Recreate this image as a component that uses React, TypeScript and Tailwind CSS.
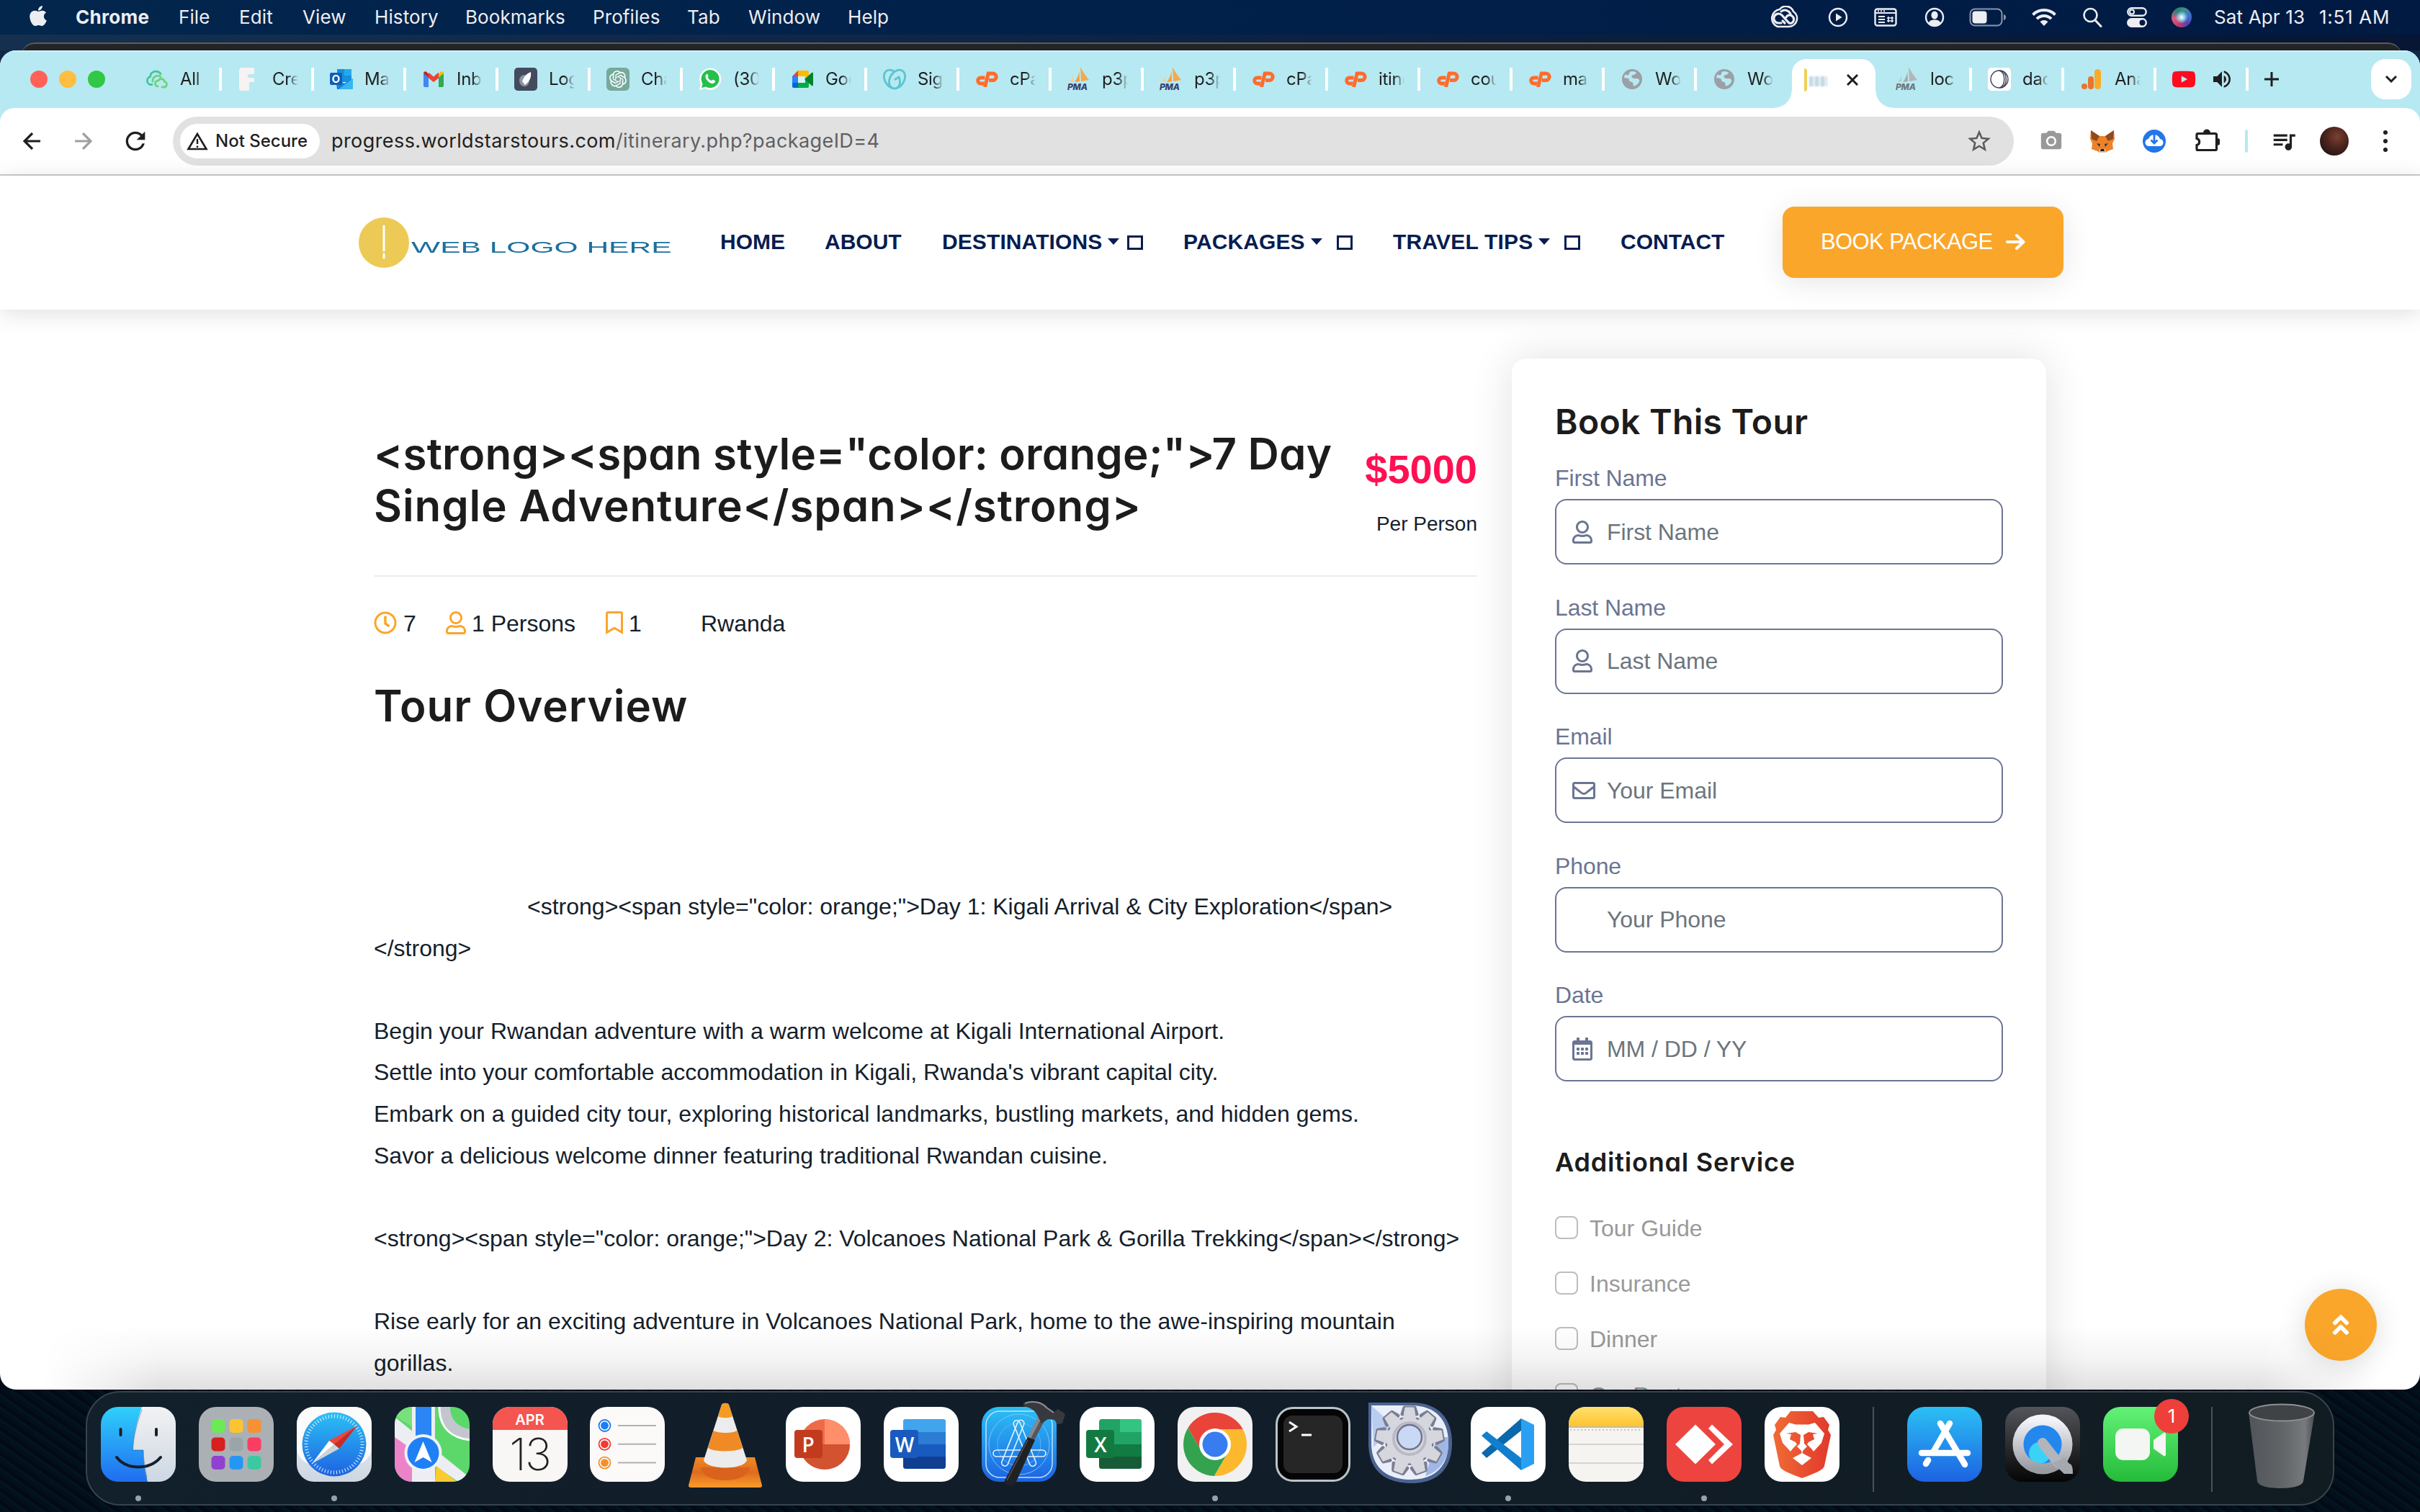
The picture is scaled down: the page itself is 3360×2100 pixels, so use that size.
import React from "react";
import {
  FaApple,
  FaYoutube,
  FaRegUser,
  FaRegClock,
  FaRegBookmark,
  FaRegEnvelope,
  FaRegCalendarAlt,
  FaAngleDoubleUp,
} from "react-icons/fa";
import { SiGodaddy, SiOpenai } from "react-icons/si";
import { MdQueueMusic, MdStarBorder, MdCameraAlt, MdVolumeUp, MdRefresh } from "react-icons/md";

type Kids = { children?: React.ReactNode };

/* ---------- macOS menu bar ---------- */

const menus: [string, string][] = [
  ["File", "w-[84px]"],
  ["Edit", "w-[88px]"],
  ["View", "w-[100px]"],
  ["History", "w-[126px]"],
  ["Bookmarks", "w-[177px]"],
  ["Profiles", "w-[131px]"],
  ["Tab", "w-[85px]"],
  ["Window", "w-[138px]"],
  ["Help", "w-[80px]"],
];

function MenuBar() {
  return (
    <div className="flex h-12 items-center bg-linear-to-r from-[#03264d] via-[#01204a] to-[#001a42] text-[26px] text-[#eceef2]">
      <FaApple className="ml-[37px] size-8 -translate-y-[2px]" />
      <span className="ml-[36px] w-[143px] -translate-y-[1px] font-bold tracking-[0.300px]">Chrome</span>
      {menus.map(([label, w]) => (
        <span key={label} className={`${w} -translate-y-[1px] whitespace-nowrap tracking-[0.100px]`}>
          {label}
        </span>
      ))}
      <div className="ml-auto flex items-center">
        <svg className="h-8 w-[42px]" viewBox="0 0 42 32" fill="none" stroke="currentColor" strokeLinecap="round">
          <path d="M12 29h16a11.500 11.500 0 0 0 6-21A11 11 0 0 0 15 5 12.500 12.500 0 0 0 12 29Z" strokeWidth="2.600" />
          <path d="M17 24h-4a6.500 6.500 0 1 1 5-11l10 11c6 2 9-6 4-10-3-2-7-1-8 2M22 24l-3-3" strokeWidth="3.200" />
          <path d="M17 8c5-4 11-1 13 3" strokeWidth="3" />
        </svg>
        <svg className="ml-[40px] size-7" viewBox="0 0 28 28" fill="none">
          <circle cx="14" cy="14" r="12" stroke="currentColor" strokeWidth="2.400" />
          <path d="M11 8.500v11l8.500-5.500z" fill="currentColor" />
        </svg>
        <svg className="ml-[36px] h-[26px] w-8" viewBox="0 0 32 26" fill="none" stroke="currentColor" strokeWidth="2.400">
          <rect x="1.500" y="1.500" width="29" height="23" rx="3" />
          <path d="M2 7h28" strokeWidth="2" />
          <path d="M5 4.300h2M9 4.300h2M13 4.300h2" strokeWidth="2" />
          <path d="M6 12h9M6 16h9M6 20h9" strokeWidth="2" />
          <path d="M20 12v8M25 12v8M18 14h9M18 18h9" strokeWidth="1.600" />
        </svg>
        <svg className="ml-[38px] size-7" viewBox="0 0 28 28">
          <circle cx="14" cy="14" r="12" stroke="currentColor" strokeWidth="2.400" fill="none" />
          <ellipse cx="14" cy="11" rx="4.600" ry="5.600" fill="currentColor" />
          <path d="M5.500 22c2-4 5-4.500 8.500-4.500s6.500.5 8.500 4.500a12 12 0 0 1-17 0z" fill="currentColor" />
        </svg>
        <svg className="ml-[34px] h-[26px] w-[52px]" viewBox="0 0 52 26" fill="none">
          <rect x="1.500" y="1.500" width="44" height="23" rx="6.500" stroke="#8b96a9" strokeWidth="2" />
          <path d="M48 9v8c2-.6 3-2 3-4s-1-3.400-3-4z" fill="#8b96a9" />
          <rect x="4.500" y="4.500" width="20" height="17" rx="4" fill="currentColor" />
        </svg>
        <svg className="ml-[34px] h-[26px] w-9" viewBox="0 0 36 26" fill="none" stroke="currentColor" strokeWidth="4">
          <path d="M2.500 9.500a22 22 0 0 1 31 0M8 15.200a14 14 0 0 1 20 0" />
          <path d="M18 25l-5.500-5.700a8 8 0 0 1 11 0z" fill="currentColor" stroke="none" />
        </svg>
        <svg className="ml-[35px] size-7" viewBox="0 0 28 28" fill="none" stroke="currentColor" strokeWidth="2.600">
          <circle cx="11.500" cy="11" r="9" />
          <path d="M18 18l8 8.500" strokeWidth="3" strokeLinecap="round" />
        </svg>
        <svg className="ml-[34px] size-7" viewBox="0 0 28 28" fill="none">
          <rect x="1.300" y="1.300" width="25.400" height="10.400" rx="5.200" stroke="currentColor" strokeWidth="2.400" />
          <circle cx="7" cy="6.500" r="3" stroke="currentColor" strokeWidth="2" />
          <rect y="15" width="28" height="13" rx="6.500" fill="currentColor" />
          <circle cx="21.500" cy="21.500" r="4" fill="#001a42" />
        </svg>
        <span className="ml-[34px] size-7 rounded-full bg-[radial-gradient(circle_at_50%_50%,#ffffff_0%,#9ad7e8_18%,transparent_45%),conic-gradient(from_20deg,#3f8f8a,#3a6fd0,#5a3fb0,#c23a6a,#e05a7a,#2f7f77,#3f8f8a)]" />
        <span className="ml-[31px] w-[146px] -translate-y-[1px] whitespace-nowrap tracking-[0.150px]">Sat Apr 13</span>
        <span className="w-[140px] -translate-y-[1px] whitespace-nowrap tracking-[0.700px]">1:51 AM</span>
      </div>
    </div>
  );
}

/* ---------- favicons ---------- */

const CloudIcon = () => (
  <svg viewBox="0 0 32 32" className="size-8" fill="none" strokeWidth="2.800" strokeLinecap="round">
    <path d="M9 23.500H7.500a5.500 5.500 0 0 1-1-10.800A8 8 0 0 1 21 8.500" stroke="#3fc79a" />
    <path d="M10 19a7 7 0 0 1 11-6.500M17 26a4 4 0 0 1 1-8 4.500 4.500 0 0 1 8.500 1.500A3.800 3.800 0 0 1 26 27h-3" stroke="#6fd37c" />
  </svg>
);
const FIcon = () => (
  <svg viewBox="0 0 32 32" className="size-8">
    <path d="M5 0h18v9h-6a3 3 0 0 0-3 3v2h9v6h-7v12H5a4 4 0 0 1-3-4V4a4 4 0 0 1 3-4z" fill="#f6f3f2" />
  </svg>
);
const Outlook = () => (
  <svg viewBox="0 0 32 32" className="size-8">
    <rect x="10" y="2" width="20" height="18" fill="#1490df" />
    <rect x="20" y="2" width="10" height="9" fill="#28a8ea" />
    <path d="M8 15l12 7 12-7v13a2 2 0 0 1-2 2H10z" fill="#1d7fd6" />
    <path d="M32 15L12 30h18a2 2 0 0 0 2-2z" fill="#35b8f1" />
    <rect x="0" y="7" width="17" height="17" rx="2" fill="#0f5fb5" />
    <ellipse cx="8.500" cy="15.500" rx="4" ry="4.600" fill="none" stroke="#fff" strokeWidth="2.400" />
  </svg>
);
const Gmail = () => (
  <svg viewBox="0 0 32 32" className="size-8">
    <path d="M2 7v18a2 2 0 0 0 2 2h5V13z" fill="#4285f4" />
    <path d="M30 7v18a2 2 0 0 1-2 2h-5V13z" fill="#34a853" />
    <path d="M2 8l7 5.500V9L6 5.500C4 4.500 2 6 2 8z" fill="#c5221f" />
    <path d="M30 8l-7 5.500V9l3-3.500c2-1 4 .5 4 2.500z" fill="#fbbc04" />
    <path d="M9 6.500l7 6 7-6v8L16 20l-7-5.500z" fill="#ea4335" />
  </svg>
);
const Rocket = () => (
  <span className="flex size-8 items-center justify-center rounded-[5px] bg-[#434b5e]">
    <svg viewBox="0 0 24 24" className="size-6">
      <ellipse cx="10" cy="14" rx="7" ry="8" fill="#8c93a1" />
      <path d="M19 2c1 8-2 13-8 18l-4-5C9 9 13 4 19 2z" fill="#fff" />
    </svg>
  </span>
);
const ChatGpt = () => (
  <span className="flex size-8 items-center justify-center rounded-[6px] bg-[#75a99b]">
    <SiOpenai className="size-6 text-white" />
  </span>
);
const WhatsApp = () => (
  <svg viewBox="0 0 32 32" className="size-8">
    <path d="M1 31l2-8A15 15 0 1 1 9 29z" fill="#fff" />
    <path d="M4 28l1.600-5.600A12.500 12.500 0 1 1 10 26.500z" fill="#25c04a" />
    <path d="M11 9c2-1 3 3 2 4s3 5 5 5c1 0 1-2 3-1s3 2 1 4-6 1-9-2-5-8-2-10z" fill="#fff" />
  </svg>
);
const Meet = () => (
  <svg viewBox="0 0 32 32" className="size-8">
    <path d="M2 12l8-8v8z" fill="#ea4335" />
    <path d="M2 12h8v9H2z" fill="#2684fc" />
    <path d="M2 21h8v7H4a2 2 0 0 1-2-2z" fill="#0066da" />
    <path d="M10 4h13a2 2 0 0 1 2 2v10l-5 0v-4H10z" fill="#ffba00" />
    <path d="M10 21h10v-5h5v10a2 2 0 0 1-2 2H10z" fill="#00ac47" />
    <path d="M19 16l10-9c1-.6 2 0 2 1v16c0 1-1 1.600-2 1z" fill="#00832d" />
    <rect x="10" y="12" width="9" height="9" fill="#d7f2f6" />
  </svg>
);
const GoDaddy = () => <SiGodaddy className="size-8 text-[#5bc6cf]" />;
const CPanel = () => (
  <svg viewBox="0 0 32 22" className="h-[22px] w-8" fill="none" stroke="#ff6c2c" strokeWidth="5">
    <path d="M13.500 9h-5a4 4 0 0 0-1.500 8h2.500l-.8 2.500" />
    <path d="M13.500 22l4.700-19h6a4.800 4.800 0 0 1 .3 9.600H19" />
  </svg>
);
function Sail({ gray }: { gray?: boolean }) {
  const c = gray ? ["#c2c2c2", "#a8a8a8", "#b5b5b5"] : ["#f9c98b", "#fb9d2f", "#f7a94a"];
  return (
    <span className="relative block h-[34px] w-8">
      <svg viewBox="0 0 32 34" className="h-[34px] w-8">
        <path d="M8 5c1 7-1 13-6 16l6-1z" fill={c[0]} />
        <path d="M16 1c1 8-2 15-6 20l7-1z" fill={c[1]} />
        <path d="M18 0c3 6 8 13 12 18l-11 2z" fill={c[2]} />
      </svg>
      <span
        className={`absolute bottom-[-1px] left-0 text-[12px] leading-[14px] font-extrabold tracking-[-0.200px] italic ${gray ? "text-[#6f777c]" : "text-[#3b3f6b]"}`}
      >
        PMA
      </span>
    </span>
  );
}
const Pma = () => <Sail />;
const Globe = () => (
  <svg viewBox="0 0 32 32" className="size-8">
    <circle cx="16" cy="16" r="14" fill="#9aa0a6" />
    <path d="M16 5c3 0 5 1 6 2-1 3-4 2-6 4s1 4 4 4 5 0 6 2-2 7-7 8.500c-2 .5-1-3-2-4.500s-5-1-5-4-4-2-7-3c0-2 1-4 2-5 3 3 5 1 5-1s2-3 4-3z" fill="#b7e9f2" />
  </svg>
);
const Dac = () => (
  <span className="flex size-8 items-center justify-center rounded-[5px] bg-white">
    <svg viewBox="0 0 28 28" className="size-7" fill="none" stroke="#3c4257" strokeWidth="1.400">
      <circle cx="14" cy="14" r="12" />
      <path d="M14 2c9 3 9 21 0 24M17 2c9 5 8 20 0 24" />
    </svg>
  </span>
);
const Analytics = () => (
  <svg viewBox="0 0 32 32" className="size-8">
    <rect x="20" y="2" width="9" height="28" rx="4.500" fill="#f9ab2b" />
    <rect x="11" y="12" width="8" height="18" rx="4" fill="#e8762c" />
    <circle cx="6" cy="26" r="4" fill="#e8762c" />
  </svg>
);

const tabs: [string, () => React.ReactElement][] = [
  ["All", CloudIcon],
  ["Crea", FIcon],
  ["Mail", Outlook],
  ["Inbo", Gmail],
  ["Logi", Rocket],
  ["Chat", ChatGpt],
  ["(30)", WhatsApp],
  ["Goo", Meet],
  ["Sign", GoDaddy],
  ["cPa", CPanel],
  ["p3p", Pma],
  ["p3p", Pma],
  ["cPa", CPanel],
  ["itine", CPanel],
  ["cou", CPanel],
  ["mai", CPanel],
  ["Wo", Globe],
  ["Wo", Globe],
];

function TabLabel({ children }: Kids) {
  return (
    <span className="ml-4 w-[36px] overflow-hidden mask-r-from-60% mask-r-to-100% whitespace-nowrap text-[24px] leading-8 tracking-[-0.300px] text-[#1f1f1f]">
      {children}
    </span>
  );
}

function Tab({ label, icon: Icon, last }: { label: string; icon: () => React.ReactElement; last?: boolean }) {
  return (
    <div className="flex h-8 w-32 shrink-0 items-center">
      <span className="ml-[22px] flex w-8 justify-center">
        <Icon />
      </span>
      <TabLabel>{label}</TabLabel>
      {!last && <span className="ml-auto h-8 w-1 shrink-0 rounded-[1px] bg-white" />}
    </div>
  );
}

function TabStrip() {
  return (
    <div className="flex h-20 items-center bg-[#b7e9f2] shadow-[inset_0_2px_0_#cdf1f7]">
      <div className="ml-[42px] flex w-[138px] gap-4">
        <span className="size-6 rounded-full bg-[#ff6159]" />
        <span className="size-6 rounded-full bg-[#ffbd41]" />
        <span className="size-6 rounded-full bg-[#30c845]" />
      </div>
      {tabs.map(([label, icon], i) => (
        <Tab key={i} label={label} icon={icon} last={i === 17} />
      ))}
      <div className="relative mr-[6px] ml-[4px] flex h-[68px] w-[116px] items-center self-end rounded-t-[20px] bg-white">
        <span className="absolute bottom-0 -left-6 size-6 bg-[radial-gradient(circle_at_0_0,transparent_23px,white_24px)]" />
        <span className="absolute -right-6 bottom-0 size-6 bg-[radial-gradient(circle_at_100%_0,transparent_23px,white_24px)]" />
        <span className="mb-[10px] ml-[17px] flex h-8 w-8 items-center gap-[3px]">
          <span className="h-8 w-1 rounded-r-full bg-[#f0cf58]" />
          <span className="mt-1 h-[14px] w-[25px] bg-[repeating-linear-gradient(90deg,#c3d8e6_0_5px,#e8f0f5_5px_8px)] blur-[1px]" />
        </span>
        <svg className="mb-[10px] ml-[27px] size-4" viewBox="0 0 16 16" stroke="#1f1f1f" strokeWidth="3">
          <path d="M1 1l14 14M15 1L1 15" />
        </svg>
      </div>
      <div className="flex">
        <Tab label="loc" icon={() => <Sail gray />} />
        <Tab label="dac" icon={Dac} />
        <Tab label="Ana" icon={Analytics} />
        <div className="flex h-8 w-32 items-center">
          <FaYoutube className="ml-[21px] size-[34px] text-[#ff0a1f]" />
          <MdVolumeUp className="ml-[20px] size-8 text-[#1f1f1f]" />
          <span className="ml-auto h-8 w-1 rounded-[1px] bg-white" />
        </div>
      </div>
      <svg className="ml-[22px] size-5" viewBox="0 0 20 20" stroke="#1f1f1f" strokeWidth="3">
        <path d="M10 0v20M0 10h20" />
      </svg>
      <span className="mr-3 ml-auto flex size-14 items-center justify-center rounded-[20px] bg-white">
        <svg className="h-[10px] w-4" viewBox="0 0 16 10" fill="none" stroke="#1f1f1f" strokeWidth="3">
          <path d="M1 1l7 7 7-7" />
        </svg>
      </span>
    </div>
  );
}

/* ---------- browser toolbar ---------- */

function Toolbar() {
  return (
    <div className="bg-[#b7e9f2]">
      <div className="flex h-[94px] items-center rounded-t-[20px] border-b-2 border-[#cbcbcb] bg-white">
        <svg className="ml-8 size-6" viewBox="0 0 24 24" fill="none" stroke="#1f1f1f" strokeWidth="3.200">
          <path d="M24 12H2M13 1L2 12l11 11" />
        </svg>
        <svg className="ml-[48px] size-6" viewBox="0 0 24 24" fill="none" stroke="#a0a0a0" strokeWidth="3.200">
          <path d="M0 12h22M11 1l11 11-11 11" />
        </svg>
        <MdRefresh className="ml-[40px] size-10 text-[#1f1f1f]" />
        <div className="ml-[32px] flex h-[68px] w-[2556px] items-center rounded-full bg-[#e1e1e1]">
          <div className="ml-[10px] flex h-12 w-[194px] items-center rounded-full bg-white">
            <svg className="ml-[9px] h-[26px] w-[30px]" viewBox="0 0 30 26" fill="none" stroke="#1f1f1f" strokeWidth="2.600">
              <path d="M15 3L2.500 24h25z" />
              <path d="M15 10v7M15 19.500v2.500" strokeWidth="2.400" />
            </svg>
            <span className="ml-[10px] whitespace-nowrap text-[24px] font-medium text-[#1f1f1f]">Not Secure</span>
          </div>
          <span className="ml-[16px] whitespace-nowrap text-[27px] tracking-[0.420px] text-[#1f1f1f]">
            progress.worldstarstours.com<span className="text-[#5f6063]">/itinerary.php?packageID=4</span>
          </span>
          <MdStarBorder className="mr-[29px] ml-auto size-[38px] text-[#5a5a5a]" />
        </div>
        <MdCameraAlt className="ml-[35px] size-[34px] text-[#999999]" />
        <svg className="ml-[37px] h-[31px] w-[34px]" viewBox="0 0 34 31">
          <path d="M1 0l12 8h8L33 0l1 12-3 6 1 8-8 3-3 2h-8l-3-2-8-3 1-8-3-6z" fill="#ee8228" />
          <path d="M1 0l12 8-4 7-7-3zM33 0L21 8l4 7 7-3z" fill="#8f4a1f" />
          <path d="M9 18l5 1-1 4zM25 18l-5 1 1 4z" fill="#2c3440" />
          <path d="M13 26h8l1 5h-10z" fill="#d8c6b8" />
          <path d="M15 26h4l1 3h-6z" fill="#1d1d1d" />
        </svg>
        <svg className="ml-[39px] size-8" viewBox="0 0 32 32">
          <circle cx="16" cy="16" r="16" fill="#2276e8" />
          <path d="M9 23a5 5 0 0 1-1-10 8.500 8.500 0 0 1 16 0 5 5 0 0 1-1 10z" fill="#fff" />
          <path d="M16 6v11M11.500 14.500L16 19l4.500-4.500" stroke="#2276e8" strokeWidth="2.800" fill="none" />
        </svg>
        <svg className="ml-[41px] size-[34px] -translate-y-[2px]" viewBox="0 0 34 34">
          <path
            d="M3 8.500h25a1.500 1.500 0 0 1 1.500 1.500v20a1.500 1.500 0 0 1-1.500 1.500H3.500A1.500 1.500 0 0 1 2 30v-5.500a4.600 4.600 0 0 0 0-9V10a1.500 1.500 0 0 1 1.500-1.500z"
            fill="none"
            stroke="#1f1f1f"
            strokeWidth="3.200"
          />
          <path d="M11 7.500a5 5 0 0 1 10 0zM30.500 15a5 5 0 0 1 0 10z" fill="#1f1f1f" />
        </svg>
        <span className="ml-[35px] h-8 w-1 rounded-full bg-[#b7e9f2]" />
        <MdQueueMusic className="ml-[31px] size-[38px] text-[#1f1f1f]" />
        <span className="ml-[31px] size-10 rounded-full bg-[radial-gradient(circle_at_60%_35%,#7a4030,#4a231c_45%,#1f1418_85%)]" />
        <span className="ml-[48px] flex h-[30px] flex-col justify-between">
          <span className="size-[6px] rounded-full bg-[#1f1f1f]" />
          <span className="size-[6px] rounded-full bg-[#1f1f1f]" />
          <span className="size-[6px] rounded-full bg-[#1f1f1f]" />
        </span>
      </div>
    </div>
  );
}

/* ---------- site header ---------- */

const Caret = () => <span className="border-x-[8px] border-t-[9px] border-x-transparent border-t-[#071d50]" />;
const Tofu = () => <span className="h-[20px] w-[22px] border-[3px] border-[#071d50]" />;

function SiteHeader() {
  return (
    <header className="relative z-10 flex h-[186px] items-center bg-white shadow-[0_5px_30px_rgba(0,0,0,0.13)]">
      <div className="ml-[498px] flex w-[502px] items-center">
        <svg className="size-[70px]" viewBox="0 0 70 70">
          <circle cx="35" cy="35" r="35" fill="#ecca55" />
          <path d="M35 12v34M35 51v5" stroke="#fff" strokeWidth="3" strokeLinecap="round" />
        </svg>
        <span className="mt-[14px] ml-[3px] origin-left scale-x-[1.89] whitespace-nowrap text-[22.500px] leading-6 text-[#1c6f9e]">
          WEB LOGO HERE
        </span>
      </div>
      <nav className="flex -translate-y-[2px] items-center text-[30px] font-bold whitespace-nowrap text-[#071d50]">
        <span className="w-[145px]">HOME</span>
        <span className="w-[163px]">ABOUT</span>
        <span className="flex w-[335px] items-center">
          <span className="w-[230px] tracking-[0.100px]">DESTINATIONS</span>
          <Caret />
          <span className="mt-[3px] ml-[11px] flex"><Tofu /></span>
        </span>
        <span className="flex w-[291px] items-center">
          <span className="w-[177px] tracking-[0.100px]">PACKAGES</span>
          <Caret />
          <span className="mt-[3px] ml-[20px] flex"><Tofu /></span>
        </span>
        <span className="flex w-[316px] items-center">
          <span className="w-[202px] tracking-[0.200px]">TRAVEL TIPS</span>
          <Caret />
          <span className="mt-[3px] ml-[20px] flex"><Tofu /></span>
        </span>
        <span className="w-[225px]">CONTACT</span>
      </nav>
      <div className="flex h-[99px] w-[390px] -translate-y-[1px] items-center rounded-[16px] bg-[#faa62b] pl-[53px] text-[31px] text-white shadow-[0_6px_40px_rgba(0,0,0,0.1)]">
        <span className="w-[257px] whitespace-nowrap tracking-[-0.600px]">BOOK PACKAGE</span>
        <svg className="h-6 w-[27px]" viewBox="0 0 27 24" fill="none" stroke="#fff" strokeWidth="4" strokeLinecap="round" strokeLinejoin="round">
          <path d="M2 12h22M15 3l9.500 9-9.500 9" />
        </svg>
      </div>
    </header>
  );
}

/* ---------- article ---------- */

const para = [
  "",
  "Begin your Rwandan adventure with a warm welcome at Kigali International Airport.",
  "Settle into your comfortable accommodation in Kigali, Rwanda's vibrant capital city.",
  "Embark on a guided city tour, exploring historical landmarks, bustling markets, and hidden gems.",
  "Savor a delicious welcome dinner featuring traditional Rwandan cuisine.",
  "",
  '<strong><span style="color: orange;">Day 2: Volcanoes National Park & Gorilla Trekking</span></strong>',
  "",
  "Rise early for an exciting adventure in Volcanoes National Park, home to the awe-inspiring mountain",
  "gorillas.",
];

function Article() {
  return (
    <article className="ml-[519px] w-[1532px] shrink-0 pt-[164px] text-[#14202b]">
      <div className="flex h-[207px] justify-between border-b-2 border-[#eeeeee]">
        <h1 className="font-[family-name:Inter,sans-serif] text-[60px] leading-[72px] font-semibold whitespace-nowrap text-[#1c1c1c] [font-feature-settings:'cv11']">
          <span className="block tracking-[0.200px]">{'<strong><span style="color: orange;">7 Day'}</span>
          <span className="block tracking-[0.900px]">{"Single Adventure</span></strong>"}</span>
        </h1>
        <div className="flex flex-col items-end">
          <span className="mt-[25px] text-[56px] leading-[66px] font-bold text-[#ff1053]">$5000</span>
          <span className="mt-[27px] text-[28px] leading-8">Per Person</span>
        </div>
      </div>
      <div className="mt-[38px] flex h-[54px] items-center text-[32px] whitespace-nowrap">
        <FaRegClock className="h-8 w-8 shrink-0 -translate-y-[1px] text-[#faa62b]" />
        <span className="w-[68px] pl-[9px]">7</span>
        <FaRegUser className="h-8 w-7 shrink-0 -translate-y-[1px] text-[#faa62b]" />
        <span className="w-[194px] pl-[8px]">1 Persons</span>
        <FaRegBookmark className="h-8 w-6 shrink-0 -translate-y-[1px] text-[#faa62b]" />
        <span className="w-[108px] pl-[8px]">1</span>
        <span>Rwanda</span>
      </div>
      <h2 className="mt-[51px] font-[family-name:Inter,sans-serif] text-[60px] leading-[72px] font-semibold tracking-[1px] text-[#1c1c1c]">
        Tour Overview
      </h2>
      <div className="mt-[215px] text-[32px] leading-[57.600px] whitespace-nowrap">
        <p className="pl-[213px]">{'<strong><span style="color: orange;">Day 1: Kigali Arrival & City Exploration</span>'}</p>
        <p>{"</strong>"}</p>
        {para.map((line, i) => (
          <p key={i} className="h-[57.600px]">
            {line}
          </p>
        ))}
      </div>
    </article>
  );
}

/* ---------- booking card ---------- */

const fields: [string, string, React.ReactNode][] = [
  ["First Name", "First Name", <FaRegUser className="h-8 w-7" />],
  ["Last Name", "Last Name", <FaRegUser className="h-8 w-7" />],
  ["Email", "Your Email", <FaRegEnvelope className="size-8" />],
  ["Phone", "Your Phone", null],
  ["Date", "MM / DD / YY", <FaRegCalendarAlt className="h-8 w-7" />],
];

function BookingCard() {
  return (
    <aside className="mt-[68px] ml-[48px] h-[1600px] w-[742px] shrink-0 rounded-[20px] bg-white px-[60px] pt-[59px] shadow-[0_0_60px_rgba(0,0,0,0.12)]">
      <h3 className="font-[family-name:Inter,sans-serif] text-[48px] leading-[58px] font-semibold tracking-[0.300px] text-[#1c1c1c]">
        Book This Tour
      </h3>
      <div className="mt-[30px]">
        {fields.map(([label, ph, icon]) => (
          <label key={label} className="block h-[179.600px] text-[32px] text-[#6b7593]">
            <span className="block leading-[38px] tracking-[-0.100px]">{label}</span>
            <span className="mt-[10px] flex h-[91px] w-[622px] items-center rounded-[16px] border-2 border-[#6b7593] pl-[22px]">
              <span className="flex w-[48px]">{icon}</span>
              <span className="tracking-[-0.050px] text-[#6c757d]">{ph}</span>
            </span>
          </label>
        ))}
      </div>
      <h4 className="mt-[49px] font-[family-name:Inter,sans-serif] text-[36px] leading-[44px] font-semibold tracking-[0.800px] text-[#1c1c1c] [font-feature-settings:'cv11']">
        Additional Service
      </h4>
      <div className="mt-[30px] text-[32px] text-[#999999]">
        {["Tour Guide", "Insurance", "Dinner", "Car Rent"].map((s) => (
          <div key={s} className="flex h-[77.400px] items-center">
            <span className="size-8 rounded-[8px] border-2 border-[#bdbdbd]" />
            <span className="mt-[2px] ml-4">{s}</span>
          </div>
        ))}
      </div>
    </aside>
  );
}

function Browser() {
  return (
    <div className="relative h-[1860px] w-full overflow-hidden rounded-[22px] bg-white">
      <TabStrip />
      <Toolbar />
      <div className="font-[family-name:Liberation_Sans,sans-serif]">
        <SiteHeader />
        <main className="flex items-start">
          <Article />
          <BookingCard />
        </main>
      </div>
      <span className="absolute right-[60px] bottom-[40px] flex size-[100px] items-center justify-center rounded-full bg-[#faa62b] shadow-[0_6px_40px_rgba(0,0,0,0.14)]">
        <FaAngleDoubleUp className="size-[36px] text-white" />
      </span>
      <div className="absolute right-[60px] bottom-0 left-[60px] h-[90px] bg-linear-to-t from-black/12 via-black/4 to-transparent mask-x-from-95% mask-x-to-100%" />
    </div>
  );
}

/* ---------- dock icons ---------- */

const Box = ({ children }: Kids) => (
  <svg viewBox="0 0 104 104" className="size-[104px] overflow-visible">
    <defs>
      <clipPath id="sq">
        <rect width="104" height="104" rx="24" />
      </clipPath>
      <linearGradient id="blue" x2="0" y2="1">
        <stop stopColor="#2bc0f5" />
        <stop offset="1" stopColor="#1d62e2" />
      </linearGradient>
      <linearGradient id="finder" x2="0" y2="1">
        <stop stopColor="#2fd0fb" />
        <stop offset="1" stopColor="#1f6df0" />
      </linearGradient>
      <linearGradient id="pale" x2="0" y2="1">
        <stop stopColor="#f2f2f4" />
        <stop offset="1" stopColor="#cdd7e2" />
      </linearGradient>
      <linearGradient id="green" x2="0" y2="1">
        <stop stopColor="#62f277" />
        <stop offset="1" stopColor="#25bb3a" />
      </linearGradient>
      <linearGradient id="cone" x2="0" y2="1">
        <stop stopColor="#f08a24" />
        <stop offset="0.5" stopColor="#de6c1f" />
        <stop offset="1" stopColor="#fb9b2c" />
      </linearGradient>
      <linearGradient id="dark" x2="0" y2="1">
        <stop stopColor="#54555b" />
        <stop offset="1" stopColor="#050505" />
      </linearGradient>
      <linearGradient id="silver" x2="0" y2="1">
        <stop stopColor="#f2f4fa" />
        <stop offset="1" stopColor="#9a9ca3" />
      </linearGradient>
      <linearGradient id="lion">
        <stop stopColor="#f06b35" />
        <stop offset="1" stopColor="#e2382b" />
      </linearGradient>
      <linearGradient id="note" x2="0" y2="1">
        <stop stopColor="#ffe070" />
        <stop offset="1" stopColor="#fdc42c" />
      </linearGradient>
      <linearGradient id="steel">
        <stop stopColor="#55585c" />
        <stop offset="0.5" stopColor="#64686b" />
        <stop offset="0.85" stopColor="#7c7f82" />
        <stop offset="1" stopColor="#4c4f52" />
      </linearGradient>
    </defs>
    {children}
  </svg>
);

const Finder = () => (
  <Box>
    <g clipPath="url(#sq)">
      <rect width="104" height="104" fill="url(#finder)" />
      <path d="M57 0C50 20 45 40 44.500 60H59c0 16 2 30 6 44h39V0z" fill="url(#pale)" />
    </g>
    <g fill="none" stroke="#15202c" strokeLinecap="round">
      <path d="M27.500 31v8M77 31v8" strokeWidth="4" />
      <path d="M22 70c14 18 46 18 61 0" strokeWidth="4" />
      <path d="M57 4C50 22 45 42 44.500 60H59c0 12 2 26 5 38" stroke="#20487a" strokeWidth="1" opacity=".5" />
    </g>
  </Box>
);
const Launchpad = () => (
  <Box>
    <rect width="104" height="104" rx="24" fill="#abb0b4" />
    {["#6bea55", "#fbc433", "#f79133", "#d71f1f", "#9aa5a8", "#fb3d64", "#9240cf", "#2497f5", "#3cc9a2"].map((c, i) => (
      <rect key={i} x={17.500 + (i % 3) * 25} y={17 + Math.floor(i / 3) * 25.500} width="19" height="19" rx="5" fill={c} />
    ))}
  </Box>
);
const Safari = () => (
  <Box>
    <rect width="104" height="104" rx="24" fill="url(#pale)" />
    <rect width="104" height="80" rx="24" fill="#fbfbfb" />
    <circle cx="52" cy="52" r="44.500" fill="url(#blue)" />
    <circle cx="52" cy="52" r="39" fill="none" stroke="#e6f2fd" strokeWidth="5" strokeDasharray="1 3.080" />
    <path d="M84 26L45 47l7 5z" fill="#f04438" />
    <path d="M84 26L52 52l7 6z" fill="#c92b24" />
    <path d="M21 79l24-32 7 5z" fill="#fdfdfd" />
    <path d="M21 79l38-21-7-6z" fill="#cfd3d6" />
  </Box>
);
const Maps = () => (
  <Box>
    <g clipPath="url(#sq)">
      <rect width="104" height="104" fill="#5cd86a" />
      <path d="M0 0h28v30L0 12z" fill="#78e17b" />
      <path d="M0 40l25 20v44H0z" fill="#ec83c9" />
      <path d="M0 14l104 84v10L88 104 0 42z" fill="#eceef3" />
      <path d="M58 82l28 22H56z" fill="#fccb30" />
      <rect x="24" width="32" height="104" fill="#eceef3" />
      <rect x="29" width="22" height="60" fill="#2b85f5" />
      <path d="M70 0c0 24 16 36 36 38" fill="none" stroke="#c3c6cf" strokeWidth="14" />
      <path d="M62 0c0 30 18 44 44 46" fill="none" stroke="#fff" strokeWidth="3" />
    </g>
    <circle cx="39.500" cy="64" r="26" fill="#f0f1f6" />
    <circle cx="39.500" cy="64" r="22" fill="#1f80f5" />
    <path d="M39.500 48l12 29-12-7-12 7z" fill="#fff" />
  </Box>
);
const Calendar = () => (
  <div className="flex size-[104px] flex-col items-center overflow-hidden rounded-[24px] bg-[#f8f7f5]">
    <div className="flex h-8 w-full items-center justify-center bg-[#f4554f] pt-1 text-[20px] font-semibold text-white">APR</div>
    <div className="mt-[3px] text-[62px] leading-[62px] font-extralight tracking-[-2px] text-[#222222]">13</div>
  </div>
);
const Reminders = () => (
  <Box>
    <rect width="104" height="104" rx="24" fill="#fbfaf9" />
    {["#1a7df4", "#f23b31", "#f4902b"].map((c, i) => (
      <g key={c}>
        <circle cx="20.500" cy={26 + i * 25.800} r="8" fill="none" stroke={c} strokeWidth="1.800" />
        <circle cx="20.500" cy={26 + i * 25.800} r="5.400" fill={c} />
        <path d={`M39 ${26 + i * 25.800}h53`} stroke="#b1b1b5" strokeWidth="2" />
      </g>
    ))}
  </Box>
);
const Vlc = () => (
  <Box>
    <path d="M11 70h82l10 39a3 3 0 0 1-3 3H4a3 3 0 0 1-3-3z" fill="url(#cone)" />
    <path d="M18 84c2 24 66 24 68 0z" fill="#d9621c" />
    <path d="M47-3c2-3 8-3 10 0l25 77c-4 14-56 14-60 0z" fill="#ececec" />
    <path d="M47-3c2-3 8-3 10 0l5 16c-4 3-16 3-20 0z" fill="#f59a25" />
    <path d="M35.500 33c7 4 26 4 33 0l7.500 24c-8 6-40 6-48 0z" fill="#f08a24" />
  </Box>
);
const Letter = ({ children }: Kids) => (
  <text x="31" y="63" textAnchor="middle" className="fill-white font-[family-name:Open_Sans,sans-serif] text-[28px] font-semibold">
    {children}
  </text>
);
const PowerPoint = () => (
  <Box>
    <rect width="104" height="104" rx="24" fill="#fff" />
    <circle cx="54" cy="52" r="35" fill="#ed6c47" />
    <path d="M54 17a35 35 0 0 1 35 35H54z" fill="#ff8f6b" />
    <path d="M19 52h70a35 35 0 0 1-70 0z" fill="#d35230" />
    <rect x="12" y="32" width="39" height="39" rx="4" fill="#c33b1f" />
    <Letter>P</Letter>
  </Box>
);
const Word = () => (
  <Box>
    <rect width="104" height="104" rx="24" fill="#fff" />
    <rect x="27" y="17" width="59" height="69" rx="4" fill="#2b7cd3" />
    <path d="M31 17h51a4 4 0 0 1 4 4v14H27V21a4 4 0 0 1 4-4z" fill="#41a5ee" />
    <path d="M27 52h59v17H27z" fill="#185abd" />
    <path d="M27 69h59v13a4 4 0 0 1-4 4H31a4 4 0 0 1-4-4z" fill="#103f91" />
    <rect x="9" y="32" width="39" height="39" rx="4" fill="#1a5abe" />
    <g transform="translate(-2 0)"><Letter>W</Letter></g>
  </Box>
);
const Excel = () => (
  <Box>
    <rect width="104" height="104" rx="24" fill="#fff" />
    <rect x="27" y="17" width="59" height="69" rx="4" fill="#21a366" />
    <path d="M56 17h26a4 4 0 0 1 4 4v14H56z" fill="#33c481" />
    <path d="M27 52h59v17H27z" fill="#107c41" />
    <path d="M27 69h59v13a4 4 0 0 1-4 4H31a4 4 0 0 1-4-4z" fill="#185c37" />
    <rect x="9" y="32" width="39" height="39" rx="4" fill="#127a40" />
    <g transform="translate(-2 0)"><Letter>X</Letter></g>
  </Box>
);
const Xcode = () => (
  <Box>
    <rect width="104" height="104" rx="24" fill="url(#blue)" />
    <rect x="6" y="6" width="92" height="92" rx="19" fill="none" stroke="#bfe3fb" strokeWidth="1.500" />
    <circle cx="52" cy="52" r="42" fill="none" stroke="#7cc4f7" strokeWidth="1" />
    <circle cx="52" cy="52" r="30" fill="none" stroke="#5fb2f3" strokeWidth="1" />
    <g fill="none" stroke="#e3f2fd" strokeWidth="1.600">
      <rect x="16" y="60" width="73" height="9" rx="4.500" />
      <rect x="47" y="18" width="9" height="68" rx="4.500" transform="rotate(22 52 30)" />
      <rect x="47" y="18" width="9" height="68" rx="4.500" transform="rotate(-22 52 30)" />
    </g>
    <path d="M80 10l10 4-18 34-9-4z" fill="#85888e" />
    <path d="M85 12l5 2-18 34-5-2z" fill="#53565c" />
    <path d="M64 42l10 4-27 60c-3 6-17 4-15-4z" fill="#202125" />
    <path d="M64 46l-29 56" stroke="#4e5056" strokeWidth="1.600" />
    <path d="M58-5c10-5 26-4 34 6l9 6 5-4 10 7-4 13-7 1-4-6-9-1-9 6-5-10c-3-7-9-12-20-14z" fill="#37393f" />
    <path d="M60-5c10-4 23-2 30 6l10 7" fill="none" stroke="#8c8f96" strokeWidth="2" />
  </Box>
);
const ChromeIcon = () => (
  <Box>
    <rect width="104" height="104" rx="24" fill="#f1f1f1" />
    <path d="M33.800 62.500L14.500 29A44 44 0 0 1 90.700 31H52z" fill="#e8443a" />
    <path d="M52 31h38.700A44 44 0 0 1 50.800 96l19.400-33.500z" fill="#fcb92d" />
    <path d="M70.200 62.500L50.800 96A44 44 0 0 1 14.500 29l19.300 33.500z" fill="#34a34f" />
    <circle cx="52" cy="52" r="22" fill="#fff" />
    <circle cx="52" cy="52" r="17.500" fill="#377df0" />
  </Box>
);
const Terminal = () => (
  <Box>
    <rect width="104" height="104" rx="24" fill="#b9c4c9" />
    <rect x="3" y="3" width="98" height="98" rx="21" fill="#050505" />
    <rect x="11" y="12" width="82" height="80" rx="12" fill="#262626" />
    <path d="M19 21l10 6.500-10 6.500" fill="none" stroke="#fff" strokeWidth="3" />
    <path d="M36 39h14" stroke="#fff" strokeWidth="3" />
  </Box>
);
const teeth = [0, 40, 80, 120, 160, 200, 240, 280, 320];
const Gear = () => (
  <Box>
    <path d="M-7-6h60C90-6 109 16 109 50s-18 56-56 56S-7 88-7 50z" fill="#4b6390" />
    <path d="M-3-2h55C86-2 104 18 104 50s-18 51-52 51S-3 84-3 50z" fill="#e9effa" />
    <path d="M-3-2L30 28 0 56z" fill="#b9cdf0" />
    <path d="M104 42H88L72 96c20-6 32-24 32-44z" fill="#9fb8e8" />
    <g fill="#7b7d90">
      <circle cx="50" cy="47" r="34" />
      {teeth.map((a) => (
        <path key={a} d="M40 10l3-9h14l3 9z" transform={`rotate(${a} 50 47)`} stroke="#7b7d90" strokeWidth="5" strokeLinejoin="round" />
      ))}
    </g>
    <g fill="#d6d7de">
      <circle cx="50" cy="47" r="31.500" />
      {teeth.map((a) => (
        <path key={a} d="M41 18l3-17h12l3 17z" transform={`rotate(${a} 50 47)`} stroke="#d6d7de" strokeWidth="1" strokeLinejoin="round" />
      ))}
    </g>
    <circle cx="50" cy="44" r="22" fill="none" stroke="#b9bac6" strokeWidth="4" />
    <circle cx="50" cy="42" r="17" fill="#c9d9f5" stroke="#71748a" strokeWidth="2.500" />
  </Box>
);
const VsCode = () => (
  <Box>
    <rect width="104" height="104" rx="24" fill="#fff" />
    <path d="M15 64l7 7 48-38V16z" fill="#0b68ac" />
    <path d="M15 40l7-6 48 37v17z" fill="#127fce" />
    <path d="M70 16l18 9v54l-18 9z" fill="#2ba0f2" />
  </Box>
);
const Notes = () => (
  <Box>
    <g clipPath="url(#sq)">
      <rect width="104" height="104" fill="#f5f4f1" />
      <rect width="104" height="27" fill="url(#note)" />
    </g>
    <path d="M0 28h104" stroke="#b4aa90" strokeWidth="1.500" />
    <path d="M2 32h100" stroke="#b5b5b5" strokeWidth="1.500" strokeDasharray="2 3" />
    <path d="M0 52h104M0 78h104" stroke="#d3d3d7" strokeWidth="2" />
  </Box>
);
const AnyDesk = () => (
  <Box>
    <rect width="104" height="104" rx="24" fill="#ee443f" />
    <path d="M40 24.500l28 27.500-28 27.500L12 52z" fill="#fff" />
    <path d="M58 30l5-5.500L92 52 63 79.500 58 74l22-22z" fill="#fff" />
  </Box>
);
const Brave = () => (
  <Box>
    <rect width="104" height="104" rx="24" fill="#fff" />
    <path d="M36 6h31l8 9 7-1 8 11-2 7 4 7-9 43c-1 5-10 9-31 17-21-8-30-12-31-17L12 39l4-7-2-7 8-11 7 1z" fill="url(#lion)" />
    <path d="M34 22l9 2.500h18l9-2.500 13 15-4 13-11 12-3-4-6-6 2-3 8-4-2-7 7-1-13-2-7 4 1 12 4 4-6 6-1 6-1-6-6-6 4-4 1-12-7-4-13 2 7 1-2 7 8 4 2 3-6 6-3 4-11-12-4-13z" fill="#fff" />
    <path d="M52 64l13 7-13 10-13-10z" fill="#fff" />
  </Box>
);
const AppStore = () => (
  <Box>
    <rect width="104" height="104" rx="24" fill="url(#blue)" />
    <g stroke="#fff" strokeWidth="8.500" strokeLinecap="round">
      <path d="M20 64h64M59 23L36 63M46 23l34 57M29 74l-3 5" />
    </g>
  </Box>
);
const QuickTime = () => (
  <Box>
    <rect width="104" height="104" rx="24" fill="url(#dark)" />
    <circle cx="52" cy="52" r="34" fill="#2387ee" />
    <circle cx="48" cy="64" r="15" fill="#3bd2f8" />
    <circle cx="52" cy="52" r="34" fill="none" stroke="url(#silver)" strokeWidth="15" />
    <path d="M52 50l22 28" stroke="#b3b5bd" strokeWidth="14" strokeLinecap="round" />
    <path d="M66 78l18-8 4 8c5 2 6 5 6 15H82z" fill="#a6a8b0" />
  </Box>
);
const FaceTime = () => (
  <Box>
    <rect width="104" height="104" rx="24" fill="url(#green)" />
    <rect x="17" y="30" width="48" height="44" rx="11" fill="#f3f6f3" />
    <path d="M70 46l14-10c2-1 3 0 3 2v28c0 2-1 3-3 2L70 58z" fill="#f3f6f3" />
    <circle cx="95" cy="13" r="24" fill="#ee3f3b" />
    <text x="95" y="22" textAnchor="middle" className="fill-white text-[26px]">1</text>
  </Box>
);
const Trash = () => (
  <Box>
    <path d="M2 7l12 96c1 7 16 10 32 10s31-3 32-10L94 7z" fill="url(#steel)" opacity=".95" />
    <ellipse cx="48" cy="8" rx="45" ry="11.500" fill="#3f4346" stroke="#8f9294" strokeWidth="1.800" />
  </Box>
);

const apps: [string, () => React.ReactElement, boolean][] = [
  ["Finder", Finder, true],
  ["Launchpad", Launchpad, false],
  ["Safari", Safari, true],
  ["Maps", Maps, false],
  ["Calendar", Calendar, false],
  ["Reminders", Reminders, false],
  ["VLC", Vlc, false],
  ["PowerPoint", PowerPoint, false],
  ["Word", Word, false],
  ["Xcode", Xcode, false],
  ["Excel", Excel, false],
  ["Chrome", ChromeIcon, true],
  ["Terminal", Terminal, false],
  ["Gear", Gear, false],
  ["VSCode", VsCode, true],
  ["Notes", Notes, false],
  ["AnyDesk", AnyDesk, true],
  ["Brave", Brave, false],
];

function Dock() {
  const cell = (name: string, Icon: () => React.ReactElement, running: boolean) => (
    <div key={name} className="flex w-[135.900px] shrink-0 flex-col items-start">
      <Icon />
      {running && <span className="mt-[19px] ml-12 size-2 rounded-full bg-[#97a1ad]" />}
    </div>
  );
  return (
    <div className="ml-[119px] flex h-[159px] w-[3122px] items-start rounded-[48px] border-2 border-[#39434b] bg-linear-to-r from-[#12202b] via-[#111d29] to-[#111c22] pt-[20px] pl-[19px]">
      {apps.map(([n, I, r]) => cell(n, I, r))}
      <span className="ml-[14px] h-[118px] w-[2px] bg-[#47525a]" />
      <span className="w-[46px]" />
      {cell("AppStore", AppStore, false)}
      {cell("QuickTime", QuickTime, false)}
      {cell("FaceTime", FaceTime, false)}
      <span className="ml-[14px] h-[118px] w-[2px] bg-[#47525a]" />
      <span className="ml-[48px]"><Trash /></span>
    </div>
  );
}

export default function App() {
  return (
    <div className="h-[2100px] w-[3360px] overflow-hidden bg-linear-to-b from-[#12294b] via-[#04101e] to-[#020c16] font-[family-name:Inter,sans-serif]">
      <MenuBar />
      <div className="h-[22px] bg-linear-to-r from-[#15304f] to-[#061634] pt-[11px]">
        <div className="mx-auto h-[40px] w-[3306px] translate-x-[2px] rounded-t-[20px] border-t-2 border-[#5b5c5d] bg-[#222425]" />
      </div>
      <div className="relative">
        <Browser />
      </div>
      <div className="h-[170px] bg-[repeating-linear-gradient(35deg,#02101c_0_5px,#03131f_5px_9px,#020b15_9px_14px)] pt-[2px]">
        <Dock />
      </div>
    </div>
  );
}
